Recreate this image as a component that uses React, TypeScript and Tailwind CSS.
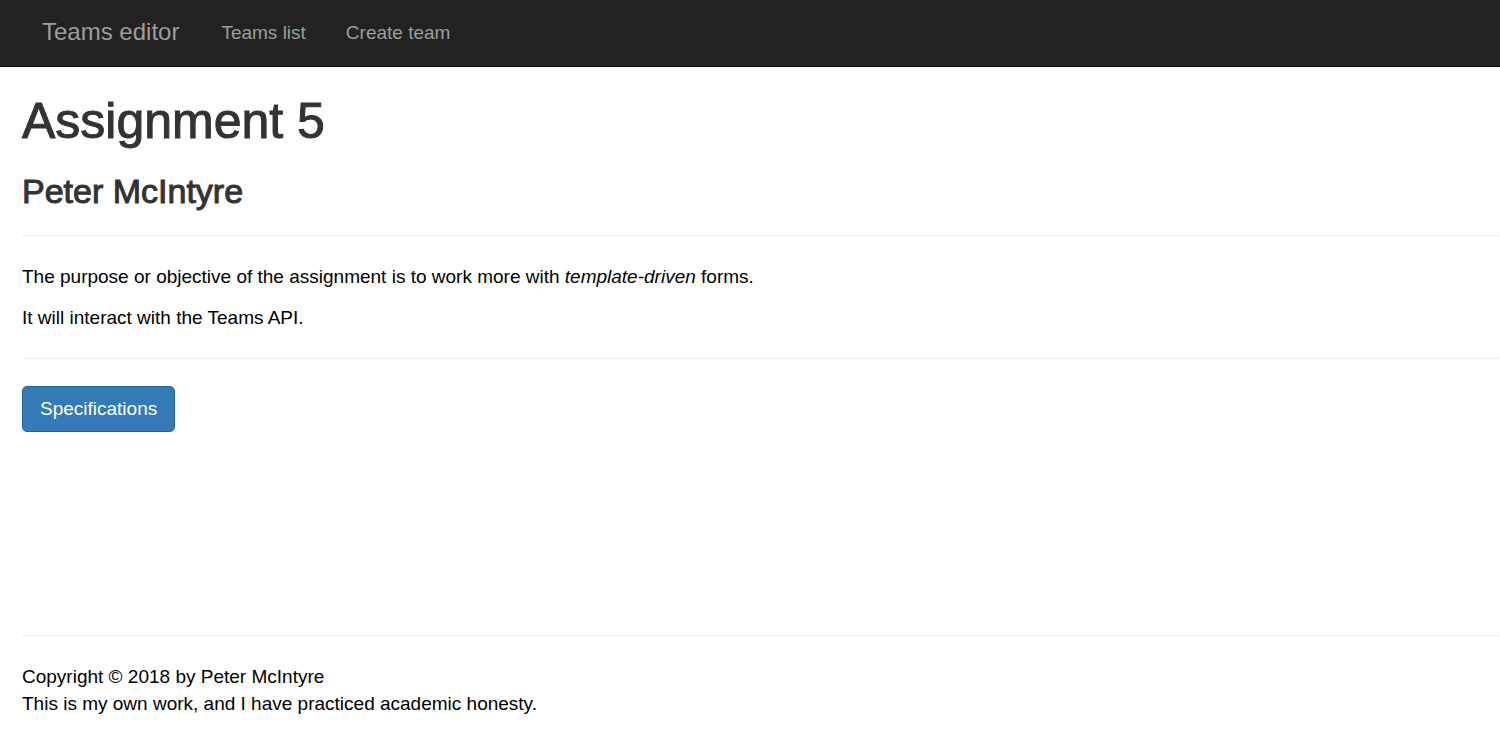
export default function App() {
  return (
    <div className="flex min-h-screen flex-col bg-white font-['Helvetica_Neue','Liberation_Sans',sans-serif] text-[19px] leading-[27px] text-black">
      <nav
        className="flex items-center gap-[42px] border-b border-[#080808] bg-[#222222] px-[42px] pt-[18px] pb-5 text-[#9d9d9d]"
        aria-label="Main"
      >
        <a href="#home" className="text-2xl leading-[28px]">Teams editor</a>
        <ul className="flex gap-10">
          <li><a href="#teams">Teams list</a></li>
          <li><a href="#create">Create team</a></li>
        </ul>
      </nav>
      <main className="pl-[22px]">
        <h1 className="mt-7 text-[50px] leading-[53px] font-medium text-[#333333] [-webkit-text-stroke:1px_#333333]">
          Assignment 5
        </h1>
        <h2 className="mt-[25px] text-[34px] leading-[36px] font-medium text-[#333333] [-webkit-text-stroke:1px_#333333]">
          Peter McIntyre
        </h2>
        <hr className="mt-[26px] border-[#eeeeee]" />
        <p className="mt-[27px]">
          The purpose or objective of the assignment is to work more with <em>template-driven</em> forms.
        </p>
        <p className="mt-[14px]">It will interact with the Teams API.</p>
        <hr className="mt-[27px] border-[#eeeeee]" />
        <a
          href="#specifications"
          className="mt-[27px] inline-block rounded-[5px] border border-[#1f669f] bg-[#337ab7] px-[17px] py-[9px] leading-[26px] text-white"
        >
          Specifications
        </a>
      </main>
      <footer className="mt-auto pb-[15px] pl-[22px]">
        <hr className="mb-[27px] border-[#eeeeee]" />
        <p>Copyright © 2018 by Peter McIntyre</p>
        <p>This is my own work, and I have practiced academic honesty.</p>
      </footer>
    </div>
  );
}
